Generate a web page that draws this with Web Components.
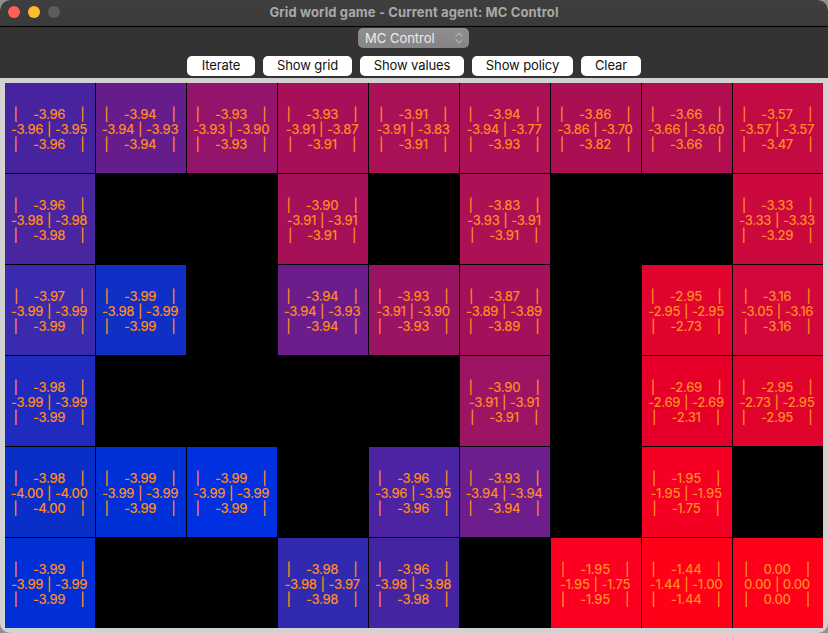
<!DOCTYPE html>
<html>
<head>
<meta charset="utf-8">
<title>Grid world game</title>
<style>
  html, body {
    margin: 0;
    height: 100%;
    background: #8f8f8f;
    overflow: hidden;
  }
</style>
</head>
<body>
<app-window title-text="Grid world game - Current agent: MC Control">
  <agent-select>MC Control</agent-select>
  <action-button w="68">Iterate</action-button>
  <action-button w="89">Show grid</action-button>
  <action-button w="104">Show values</action-button>
  <action-button w="101">Show policy</action-button>
  <action-button w="60">Clear</action-button>
  <grid-board></grid-board>
</app-window>
<script>
const FONT = 'Inter, "Liberation Sans", sans-serif'

// up, left, right, down, colour. null is a wall
const CELLS = [
  [
    ['-3.96', '-3.96', '-3.95', '-3.96', '#47239f'],
    ['-3.94', '-3.94', '-3.93', '-3.94', '#661d8c'],
    ['-3.93', '-3.93', '-3.90', '-3.93', '#94146b'],
    ['-3.93', '-3.91', '-3.87', '-3.91', '#a71058'],
    ['-3.91', '-3.91', '-3.83', '-3.91', '#a91056'],
    ['-3.94', '-3.94', '-3.77', '-3.93', '#ab0f55'],
    ['-3.86', '-3.86', '-3.70', '-3.82', '#ab0f53'],
    ['-3.66', '-3.66', '-3.60', '-3.66', '#b00e50'],
    ['-3.57', '-3.57', '-3.57', '-3.47', '#c40a42'],
  ],
  [
    ['-3.96', '-3.98', '-3.98', '-3.98', '#4a25a0'],
    null,
    null,
    ['-3.90', '-3.91', '-3.91', '-3.91', '#a51058'],
    null,
    ['-3.83', '-3.93', '-3.91', '-3.91', '#ae1056'],
    null,
    null,
    ['-3.33', '-3.33', '-3.33', '-3.29', '#cb093c'],
  ],
  [
    ['-3.97', '-3.99', '-3.99', '-3.99', '#3a2aae'],
    ['-3.99', '-3.98', '-3.99', '-3.99', '#1030c5'],
    null,
    ['-3.94', '-3.94', '-3.93', '-3.94', '#6b1d8c'],
    ['-3.93', '-3.91', '-3.90', '-3.93', '#991462'],
    ['-3.87', '-3.89', '-3.89', '-3.89', '#a4105a'],
    null,
    ['-2.95', '-2.95', '-2.95', '-2.73', '#e0042e'],
    ['-3.16', '-3.05', '-3.16', '-3.16', '#d3073a'],
  ],
  [
    ['-3.98', '-3.99', '-3.99', '-3.99', '#1f2bbf'],
    null,
    null,
    null,
    null,
    ['-3.90', '-3.91', '-3.91', '-3.91', '#9c1464'],
    null,
    ['-2.69', '-2.69', '-2.69', '-2.31', '#e60029'],
    ['-2.95', '-2.73', '-2.95', '-2.95', '#e0042d'],
  ],
  [
    ['-3.98', '-4.00', '-4.00', '-4.00', '#0a2fc8'],
    ['-3.99', '-3.99', '-3.99', '-3.99', '#0030d8'],
    ['-3.99', '-3.99', '-3.99', '-3.99', '#0030e0'],
    null,
    ['-3.96', '-3.96', '-3.95', '-3.96', '#4c23a2'],
    ['-3.93', '-3.94', '-3.94', '-3.94', '#6b1e8c'],
    null,
    ['-1.95', '-1.95', '-1.95', '-1.75', '#f40022'],
    null,
  ],
  [
    ['-3.99', '-3.99', '-3.99', '-3.99', '#0030d5'],
    null,
    null,
    ['-3.98', '-3.98', '-3.97', '-3.98', '#302aaf'],
    ['-3.96', '-3.98', '-3.98', '-3.98', '#4524a3'],
    null,
    ['-1.95', '-1.95', '-1.75', '-1.95', '#fb0020'],
    ['-1.44', '-1.44', '-1.00', '-1.44', '#ff0018'],
    ['0.00', '0.00', '0.00', '0.00', '#ff001a'],
  ],
]

class AppWindow extends HTMLElement {
  constructor() {
    super()
    const shadow = this.attachShadow({ mode: 'open' })
    shadow.innerHTML = `
      <style>
        :host {
          display: flex;
          flex-direction: column;
          width: 828px;
          height: 633px;
          border-radius: 10px;
          overflow: hidden;
          background: #d2d2d2;
          font-family: ${FONT};
        }
        .titlebar {
          position: relative;
          display: flex;
          align-items: center;
          justify-content: center;
          box-sizing: content-box;
          height: 24px;
          padding-bottom: 2px;
          background: linear-gradient(#3f3f3f, #3a3a3a);
          border-bottom: 1px solid #000;
          color: #a9a9a9;
          font-size: 13px;
          font-weight: 700;
          letter-spacing: 0.12px;
        }
        .lights {
          position: absolute;
          left: 8px;
          top: 6px;
          display: flex;
          gap: 8px;
        }
        .lights i {
          width: 12px;
          height: 12px;
          border-radius: 50%;
        }
        .toolbar {
          display: flex;
          flex-direction: column;
          align-items: center;
          gap: 8px;
          height: 51px;
          box-sizing: border-box;
          padding-top: 1px;
          background: #333;
        }
        .buttons {
          display: flex;
          gap: 8px;
        }
        .content {
          padding: 5px;
        }
      </style>
      <div class="titlebar">
        <div class="lights">
          <i style="background:#ff5f57"></i>
          <i style="background:#febc2e"></i>
          <i style="background:#5c5c5c"></i>
        </div>
        <span>${this.getAttribute('title-text')}</span>
      </div>
      <div class="toolbar">
        <slot name="select"></slot>
        <div class="buttons"><slot name="buttons"></slot></div>
      </div>
      <div class="content"><slot></slot></div>
    `
  }

  connectedCallback() {
    this.querySelector('agent-select').slot = 'select'
    this.querySelectorAll('action-button').forEach(b => (b.slot = 'buttons'))
  }
}

class AgentSelect extends HTMLElement {
  constructor() {
    super()
    const shadow = this.attachShadow({ mode: 'open' })
    shadow.innerHTML = `
      <style>
        :host {
          display: flex;
          align-items: center;
          justify-content: space-between;
          box-sizing: border-box;
          width: 111px;
          height: 20px;
          margin-right: 1px;
          padding: 0 5px 0 7px;
          border-radius: 5px;
          background: linear-gradient(#8e8e8e, #858585);
          color: #ececec;
          font-size: 13px;
        }
        svg {
          display: block;
        }
      </style>
      <span><slot></slot></span>
      <svg width="10" height="14" viewBox="0 0 10 14" fill="none" stroke="#b4b4b4" stroke-width="1.2" stroke-linecap="round" stroke-linejoin="round">
        <path d="M2 5.2 5 2.2 8 5.2"/>
        <path d="M2 8.8 5 11.8 8 8.8"/>
      </svg>
    `
  }
}

class ActionButton extends HTMLElement {
  constructor() {
    super()
    const shadow = this.attachShadow({ mode: 'open' })
    shadow.innerHTML = `
      <style>
        :host {
          display: flex;
          align-items: center;
          justify-content: center;
          box-sizing: border-box;
          width: ${this.getAttribute('w')}px;
          height: 20px;
          padding-bottom: 2px;
          border-radius: 5px;
          background: #fff;
          color: #111;
          font-size: 13px;
          letter-spacing: -0.1px;
        }
      </style>
      <slot></slot>
    `
  }
}

class GridCell extends HTMLElement {
  constructor(data) {
    super()
    const shadow = this.attachShadow({ mode: 'open' })
    const [up, left, right, down, colour] = data
    shadow.innerHTML = `
      <style>
        :host {
          display: flex;
          align-items: center;
          justify-content: center;
          box-sizing: border-box;
          padding: 2px 2px 0 0;
          background: ${colour};
          color: #ff8a20;
          font-size: 13px;
          font-weight: 500;
          line-height: 15px;
          letter-spacing: -0.35px;
          word-spacing: 0.7px;
          text-align: center;
          white-space: pre;
        }
      </style>
      <div>|    ${up}    |
${left} | ${right}
|    ${down}    |</div>
    `
  }
}

class GridBoard extends HTMLElement {
  constructor() {
    super()
    const shadow = this.attachShadow({ mode: 'open' })
    shadow.innerHTML = `
      <style>
        :host {
          display: grid;
          grid-template-columns: repeat(9, 90px);
          grid-template-rows: repeat(6, 90px);
          gap: 1px;
          background: #000;
        }
        .wall {
          background: #000;
        }
      </style>
    `
    CELLS.flat().forEach(data => {
      if (data) {
        shadow.appendChild(new GridCell(data))
      } else {
        const wall = document.createElement('div')
        wall.className = 'wall'
        shadow.appendChild(wall)
      }
    })
  }
}

customElements.define('agent-select', AgentSelect)
customElements.define('action-button', ActionButton)
customElements.define('grid-cell', GridCell)
customElements.define('grid-board', GridBoard)
customElements.define('app-window', AppWindow)
</script>
</body>
</html>
